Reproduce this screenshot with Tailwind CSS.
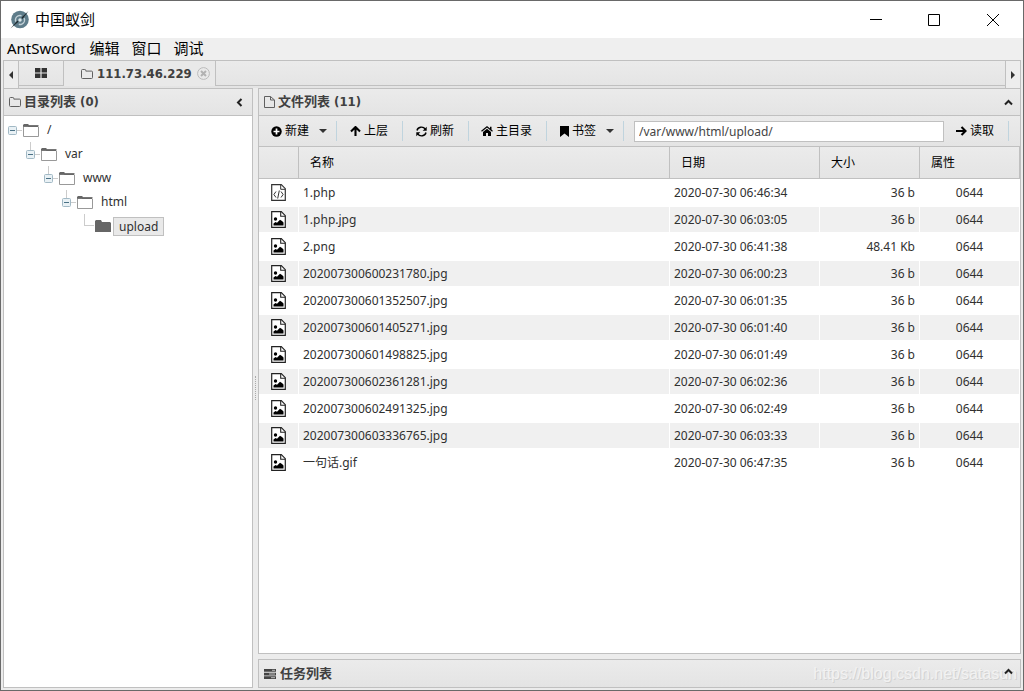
<!DOCTYPE html>
<html lang="zh-CN">
<head>
<meta charset="utf-8">
<meta name="viewport" content="width=device-width, initial-scale=1">
<title>中国蚁剑</title>
<script src="https://cdn.jsdelivr.net/npm/@tailwindcss/browser@4"></script>
</head>
<body class="h-screen overflow-hidden font-['Noto_Sans','Noto_Sans_CJK_SC',sans-serif] text-xs text-[#303030]">
<svg class="hidden">
  <symbol id="folder" viewBox="0 0 12 10"><path d="M1.5 9.5a1 1 0 0 1-1-1v-7a1 1 0 0 1 1-1h2.3a1 1 0 0 1 1 1v.6h5.7a1 1 0 0 1 1 1v5.4a1 1 0 0 1-1 1z" fill="none" stroke="#606060"/></symbol>
  <symbol id="tree-open" viewBox="0 0 16 13"><path d="M0 1l1-1h4l1 1v1h9v1H0z" fill="#666"/><path d="M.5 2.500V12.500H15.500V2.500" fill="none" stroke="#999"/><path d="M0 2.500h5L6 1.500h9.500" fill="none" stroke="#777"/></symbol>
  <symbol id="tree-closed" viewBox="0 0 16 12"><path d="M0 1l1-1h5l1 2h8l1 1v9H0z" fill="#666"/></symbol>
  <symbol id="minus" viewBox="0 0 9 9"><rect x=".5" y=".5" width="8" height="8" rx="1" fill="#e9f1f5" stroke="#a2b9c5"/><path d="M2 4.500h5" stroke="#4a7185"/></symbol>
  <symbol id="image" viewBox="0 0 15 17"><path d="M.7.7h9.600l4 4v11.600H.7z" fill="#fff" stroke="#222" stroke-width="1.200"/><path d="M9.700 1v4.300H14" fill="none" stroke="#222" stroke-width="1.100"/><circle cx="4.500" cy="8" r="1.700"/><path d="M2.500 14.500v-2l2-1.500 1.500.8L9 8.800l2 1.200 1.500 1.500v3z"/></symbol>
  <symbol id="code" viewBox="0 0 15 17"><path d="M.7.7h9.600l4 4v11.600H.7z" fill="#fff" stroke="#333" stroke-width="1.200"/><path d="M9.700 1v4.300H14M5 7.500L2.900 10.500 5 13.500M10 7.500l2.100 3L10 13.500M8.300 6.500l-1.600 8" fill="none" stroke="#333"/></symbol>
  <symbol id="caret" viewBox="0 0 8 4"><path d="M0 0h8L4 4z" fill="#333"/></symbol>
  <symbol id="chev-up" viewBox="0 0 9 7"><path d="M1 5.500l3.500-3.500L8 5.500" fill="none" stroke="#222" stroke-width="2"/></symbol>
</svg>
<div class="flex h-full flex-col border border-[#696969] bg-[#ececec]">
  <header class="flex h-[37px] shrink-0 items-center bg-white pl-2 text-black">
    <svg class="mr-1.5 size-5" viewBox="0 0 20 20"><circle cx="11" cy="9.500" r="8.800" fill="#5e7c8a"/><circle cx="11" cy="10" r="4.500" fill="none" stroke="#c2d0d6" stroke-width="1.500" stroke-dasharray="10 4.100" transform="rotate(-25 11 10)"/><circle cx="11" cy="10" r="1.700" fill="#dce6ea"/><path d="M1.500 18.500L8.500 10.500l1 1.200zM12.500 7.500L19.500 1l-6 8z" fill="#20292d"/></svg>
    <h1 class="grow pb-0.5 text-[15px]">中国蚁剑</h1>
    <button class="flex h-full w-[58px] items-center justify-center" aria-label="最小化"><svg class="size-3" viewBox="0 0 12 12"><path d="M0 5.500h12" stroke="#000"/></svg></button>
    <button class="flex h-full w-[58px] items-center justify-center" aria-label="最大化"><svg class="size-3" viewBox="0 0 12 12"><path d="M.5.5h11v11H.5z" fill="none" stroke="#000"/></svg></button>
    <button class="mr-px flex h-full w-[59px] items-center justify-center" aria-label="关闭"><svg class="size-3" viewBox="0 0 12 12"><path d="M0 0l12 12M12 0L0 12" stroke="#000"/></svg></button>
  </header>
  <nav class="flex h-[22px] shrink-0 items-center gap-3 bg-[#efefef] pb-0.5 pl-1.5 text-[15px] text-black">
    <button class="mr-0.5">AntSword</button><button>编辑</button><button>窗口</button><button>调试</button>
  </nav>
  <main class="flex min-h-0 grow flex-col px-0.5 pb-0.5">
    <div class="flex h-7 shrink-0 border-x border-t border-[#c0c0c0] bg-linear-to-b from-[#ebebeb] to-[#e4e4e4]">
      <button class="flex w-[15px] items-center justify-center border-r border-[#c0c0c0] bg-[#ededed]" aria-label="向左"><svg class="h-2 w-1" viewBox="0 0 4 8"><path d="M4 0v8L0 4z" fill="#333"/></svg></button>
      <div class="flex h-[25px] grow">
        <button class="flex w-[45px] items-center justify-center border-r border-b border-[#c0c0c0]" aria-label="主页"><svg class="h-[10px] w-3" viewBox="0 0 12 10"><path d="M0 0h5.400v4.400H0zM6.600 0H12v4.400H6.600zM0 5.600h5.400V10H0zM6.600 5.600H12V10H6.600z" fill="#333"/></svg></button>
        <div class="flex w-[152px] items-center border-r border-[#c0c0c0] bg-[#e9e9e9] pl-[17px]">
          <svg class="mr-1 h-[10px] w-3"><use href="#folder"/></svg>
          <span class="w-[100px] font-['DejaVu_Sans_Condensed','DejaVu_Sans',sans-serif] text-[13px] font-bold text-[#404040]">111.73.46.229</span>
          <button aria-label="关闭标签"><svg class="size-[13px]" viewBox="0 0 13 13"><circle cx="6.500" cy="6.500" r="5.900" fill="none" stroke="#bbb"/><path d="M4 4l5 5M9 4L4 9" stroke="#b2b2b2" stroke-width="2"/></svg></button>
        </div>
        <div class="grow border-b border-[#c0c0c0]"></div>
      </div>
      <button class="flex w-[15px] items-center justify-center border-l border-[#c0c0c0] bg-[#ededed]" aria-label="向右"><svg class="h-2 w-1" viewBox="0 0 4 8"><path d="M0 0v8l4-4z" fill="#333"/></svg></button>
    </div>
    <div class="flex min-h-0 grow">
      <aside class="flex w-[250px] shrink-0 flex-col border border-[#c0c0c0] bg-white">
        <div class="flex h-[27px] shrink-0 items-center border-b border-[#c0c0c0] bg-linear-to-b from-[#ebebeb] to-[#e4e4e4] px-[5px]">
          <svg class="mr-[3px] h-[10px] w-3"><use href="#folder"/></svg>
          <h2 class="grow font-['DejaVu_Sans_Condensed','DejaVu_Sans','Noto_Sans_CJK_SC',sans-serif] text-[13px] font-bold text-[#404040]">目录列表 (0)</h2>
          <button class="mr-1" aria-label="折叠"><svg class="h-[9px] w-[7px]" viewBox="0 0 7 9"><path d="M5.500 1L2 4.500 5.500 8" fill="none" stroke="#222" stroke-width="2"/></svg></button>
        </div>
        <ul class="pt-0.5">
          <li class="flex h-6 items-center pl-1"><button aria-label="收起"><svg class="size-[9px]"><use href="#minus"/></svg></button><i class="mr-px h-px w-[5px] bg-[#ccc]"></i><svg class="mr-2 h-[13px] w-4"><use href="#tree-open"/></svg><span>/</span></li>
          <li class="flex h-6 items-center pl-[22px]"><button class="relative before:absolute before:-top-2 before:left-1 before:h-2 before:w-px before:bg-[#ccc]" aria-label="收起"><svg class="size-[9px]"><use href="#minus"/></svg></button><i class="mr-px h-px w-[5px] bg-[#ccc]"></i><svg class="mr-2 h-[13px] w-4"><use href="#tree-open"/></svg><span>var</span></li>
          <li class="flex h-6 items-center pl-10"><button class="relative before:absolute before:-top-2 before:left-1 before:h-2 before:w-px before:bg-[#ccc]" aria-label="收起"><svg class="size-[9px]"><use href="#minus"/></svg></button><i class="mr-px h-px w-[5px] bg-[#ccc]"></i><svg class="mr-2 h-[13px] w-4"><use href="#tree-open"/></svg><span>www</span></li>
          <li class="flex h-6 items-center pl-[58px]"><button class="relative before:absolute before:-top-2 before:left-1 before:h-2 before:w-px before:bg-[#ccc]" aria-label="收起"><svg class="size-[9px]"><use href="#minus"/></svg></button><i class="mr-px h-px w-[5px] bg-[#ccc]"></i><svg class="mr-2 h-[13px] w-4"><use href="#tree-open"/></svg><span>html</span></li>
          <li class="flex h-6 items-center pl-20"><i class="mr-px mb-3 h-3 w-[10px] border-b border-l border-[#ccc]"></i><svg class="mr-0.5 h-3 w-4"><use href="#tree-closed"/></svg><span class="border border-[#c0c0c0] bg-[#e9e9e9] px-[5px] leading-[17px]">upload</span></li>
        </ul>
      </aside>
      <div class="flex w-[5px] shrink-0 items-center"><i class="ml-0.5 h-6 border-l border-dotted border-[#aaa]"></i></div>
      <div class="flex min-w-0 grow flex-col gap-[5px]">
        <section class="flex min-h-0 grow flex-col border border-[#c0c0c0] bg-white">
          <div class="flex h-[27px] shrink-0 items-center border-b border-[#c0c0c0] bg-linear-to-b from-[#ebebeb] to-[#e4e4e4] px-[5px]">
            <svg class="mr-[3px] h-3 w-[11px]" viewBox="0 0 11 12"><path d="M.5.5h6l4 3.500v7.500H.5zM6.500.5V4h4" fill="none" stroke="#606060"/></svg>
            <h2 class="grow font-['DejaVu_Sans_Condensed','DejaVu_Sans','Noto_Sans_CJK_SC',sans-serif] text-[13px] font-bold text-[#404040]">文件列表 (11)</h2>
            <button aria-label="折叠"><svg class="mr-0.5 h-[7px] w-[9px]"><use href="#chev-up"/></svg></button>
          </div>
          <div class="flex h-[31px] shrink-0 items-center border-b border-[#c0c0c0] bg-linear-to-b from-[#ebebeb] to-[#e4e4e4] text-black">
            <button class="flex h-5 w-[78px] items-center gap-[3px] border-r border-[#c0d4de] pl-3"><svg class="size-[11px]" viewBox="0 0 11 11"><circle cx="5.500" cy="5.500" r="5.200"/><path d="M5.500 2.500v6M2.500 5.500h6" stroke="#fff" stroke-width="1.700"/></svg>新建<svg class="ml-[7px] h-1 w-2"><use href="#caret"/></svg></button>
            <button class="flex h-5 w-[66px] items-center gap-[3px] border-r border-[#c0d4de] pl-[13px]"><svg class="h-[10px] w-[11px]" viewBox="0 0 11 10"><path d="M5.500 10V2M1 5.500L5.500 1 10 5.500" fill="none" stroke="#000" stroke-width="2.100"/></svg>上层</button>
            <button class="flex h-5 w-[66px] items-center gap-[3px] border-r border-[#c0d4de] pl-[13px]"><svg class="size-[11px]" viewBox="0 0 11 11"><path d="M1 4.500a4.500 4 0 0 1 8.200-1.500M10 6.500a4.500 4 0 0 1-8.200 1.500" fill="none" stroke="#000" stroke-width="1.400"/><path d="M10.700.7v4h-4zM.3 10.300v-4h4z"/></svg>刷新</button>
            <button class="flex h-5 w-[78px] items-center gap-[3px] border-r border-[#c0d4de] pl-3"><svg class="h-[10px] w-3" viewBox="0 0 12 10"><path d="M.5 5.300L6 .8l5.500 4.500" fill="none" stroke="#000" stroke-width="1.200"/><path d="M9 .7h1.500V4L9 3zM2 6L6 2.700 10 6v4H7V7H5v3H2z"/></svg>主目录</button>
            <button class="flex h-5 w-[77px] items-center gap-[3px] border-r border-[#c0d4de] pl-[13px]"><svg class="h-[11px] w-[9px]" viewBox="0 0 9 11"><path d="M0 0h9v11L4.500 7.500 0 11z"/></svg>书签<svg class="ml-[7px] h-1 w-2"><use href="#caret"/></svg></button>
            <input class="ml-[10px] h-[21px] min-w-0 grow border border-[#c0c0c0] bg-white px-1 text-[#444]" aria-label="路径" value="/var/www/html/upload/">
            <button class="mr-[11px] flex h-5 w-[65px] items-center gap-[3px] border-r border-[#c0d4de] pl-3"><svg class="h-[10px] w-[11px]" viewBox="0 0 11 10"><path d="M0 5h9M5.500 1L9.500 5l-4 4" fill="none" stroke="#000" stroke-width="2.100"/></svg>读取</button>
          </div>
          <table class="w-full table-fixed border-separate border-spacing-0">
            <colgroup><col class="w-10"><col><col class="w-[150px]"><col class="w-[100px]"><col class="w-[100px]"></colgroup>
            <thead class="bg-linear-to-b from-[#ebebeb] to-[#e4e4e4] text-black">
              <tr class="h-8 text-left *:border-r *:border-b *:border-[#c0c0c0] *:pl-[11px] *:font-normal"><th aria-label="类型"></th><th>名称</th><th>日期</th><th>大小</th><th>属性</th></tr>
            </thead>
            <tbody id="files" class="[&>tr:nth-child(even)]:bg-[#f0f0f0]"></tbody>
          </table>
        </section>
        <section class="flex h-[29px] shrink-0 items-center border border-[#c0c0c0] bg-linear-to-b from-[#ebebeb] to-[#e4e4e4] px-[5px]">
          <svg class="mr-1 h-[10px] w-3" viewBox="0 0 12 10"><path d="M0 0h12v2.700H0zM0 3.700h12v2.700H0zM0 7.300h12V10H0z" fill="#444"/><path d="M8 1.300h3M5 5h6M7 8.700h4" stroke="#bbb"/></svg>
          <h2 class="grow text-[13px] font-bold text-[#404040]">任务列表</h2>
          <div class="relative flex h-6 items-center pb-1"><span class="absolute -right-0.5 bottom-0 font-['Liberation_Sans',sans-serif] text-base leading-6 whitespace-nowrap text-[#f2f2f2] [text-shadow:1px_1px_0_#d2d2d2]">https://blog.csdn.net/satasun</span><button class="relative" aria-label="展开"><svg class="mr-0.5 h-[7px] w-[9px]"><use href="#chev-up"/></svg></button></div>
        </section>
      </div>
    </div>
  </main>
</div>
<template id="row"><tr class="h-[27px] *:border-y *:border-r *:border-white"><td class="pl-3"><svg class="h-[17px] w-[15px]"><use/></svg></td><td class="pl-1"></td><td class="pl-1"></td><td class="pr-1 text-right"></td><td class="text-center"></td></tr></template>
<script>
const files = [
  ['1.php', '06:46:34', '36 b'], ['1.php.jpg', '06:03:05', '36 b'], ['2.png', '06:41:38', '48.41 Kb'],
  ['202007300600231780.jpg', '06:00:23', '36 b'], ['202007300601352507.jpg', '06:01:35', '36 b'],
  ['202007300601405271.jpg', '06:01:40', '36 b'], ['202007300601498825.jpg', '06:01:49', '36 b'],
  ['202007300602361281.jpg', '06:02:36', '36 b'], ['202007300602491325.jpg', '06:02:49', '36 b'],
  ['202007300603336765.jpg', '06:03:33', '36 b'], ['一句话.gif', '06:47:35', '36 b']
];
for (const [name, time, size] of files) {
  const row = document.getElementById('row').content.cloneNode(true);
  row.querySelector('use').setAttribute('href', name.endsWith('.php') ? '#code' : '#image');
  const cells = row.querySelectorAll('td');
  cells[1].textContent = name;
  cells[2].textContent = '2020-07-30 ' + time;
  cells[3].textContent = size;
  cells[4].textContent = '0644';
  document.getElementById('files').append(row);
}
</script>
</body>
</html>
